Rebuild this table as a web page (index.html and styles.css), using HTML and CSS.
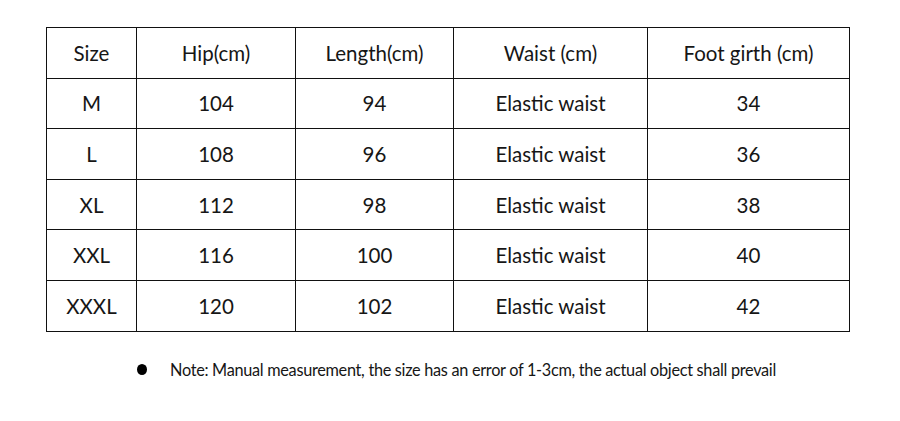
FILE: index.html
```html
<!DOCTYPE html>
<html lang="en">

<head>
    <meta charset="UTF-8">
    <title>Size chart</title>
    <link rel="stylesheet" href="styles.css">
</head>

<body>
    <div class="chart">
        <table class="size-table">
            <tr>
                <td class="col-size">Size</td>
                <td class="col-hip">Hip(cm)</td>
                <td class="col-length">Length(cm)</td>
                <td class="col-waist">Waist (cm)</td>
                <td class="col-foot">Foot girth (cm)</td>
            </tr>
            <tr><td>M</td><td>104</td><td>94</td><td>Elastic waist</td><td>34</td></tr>
            <tr><td>L</td><td>108</td><td>96</td><td>Elastic waist</td><td>36</td></tr>
            <tr><td>XL</td><td>112</td><td>98</td><td>Elastic waist</td><td>38</td></tr>
            <tr><td>XXL</td><td>116</td><td>100</td><td>Elastic waist</td><td>40</td></tr>
            <tr><td>XXXL</td><td>120</td><td>102</td><td>Elastic waist</td><td>42</td></tr>
        </table>

        <!-- note under the table -->
        <div class="note">
            <span class="note-dot"></span>
            <span class="note-text">Note: Manual measurement, the size has an error of 1-3cm, the actual object shall prevail</span>
        </div>
    </div>
</body>

</html>
```

FILE: styles.css
```css
body {
    margin: 0;
    background: #fff;
    color: #161616;
    font-family: Lato, "Open Sans", sans-serif;
}

.chart {
    padding: 27px 0 0 46px;
}

.size-table {
    border-collapse: collapse;
    width: 804px;
    table-layout: fixed;
}

.size-table td {
    border: 1px solid #111;
    height: 49.6px;
    padding: 0;
    text-align: center;
    font-size: 20.5px;
}

.col-size { width: 89px; }
.col-hip { width: 158px; }
.col-length { width: 157px; }
.col-waist { width: 193px; }

/* note line */
.note {
    display: flex;
    align-items: center;
    margin-top: 28px;
    padding-left: 91px;
}

.note-dot {
    width: 10px;
    height: 11px;
    border-radius: 50%;
    background: #000;
}

.note-text {
    margin-left: 23px;
    font-size: 16.3px;
    letter-spacing: -0.3px;
}
```
